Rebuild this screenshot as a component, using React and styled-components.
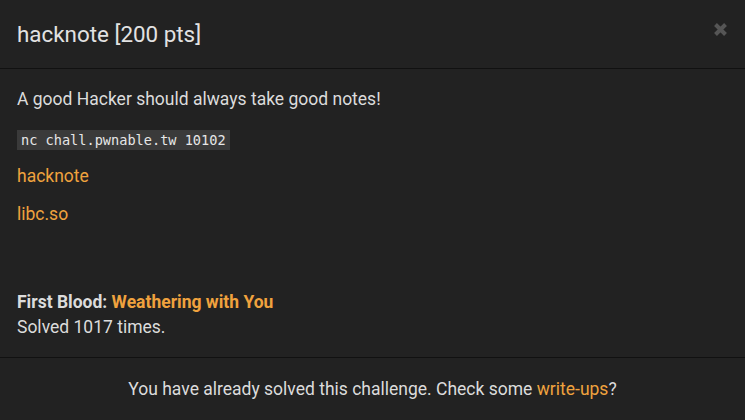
import React from 'react'
import styled, { createGlobalStyle } from 'styled-components'

const GlobalStyle = createGlobalStyle`
  html, body {
    margin: 0;
    padding: 0;
    background: #222222;
  }
  body {
    font-family: Roboto, 'Liberation Sans', sans-serif;
    color: #dcdcdc;
  }
`

const Modal = styled.div`
  width: 745px;
  height: 420px;
  display: flex;
  flex-direction: column;
  background: #222222;
`

const Header = styled.div`
  height: 68px;
  padding: 0 17px;
  display: flex;
  align-items: center;
  justify-content: space-between;
  border-bottom: 1px solid #111111;
`

const Title = styled.h4`
  margin: 0;
  font-size: 22.4px;
  font-weight: 400;
  color: #e2e2e2;
`

const Close = styled.svg`
  width: 15px;
  height: 15px;
  margin-right: 0;
  margin-top: -10px;
`

const Body = styled.div`
  flex: 1;
  padding: 18px 17px 0;
  display: flex;
  flex-direction: column;
  font-size: 17.5px;
`

const Text = styled.p`
  margin: 0 0 ${p => p.$gap || 0}px;
  line-height: ${p => p.$lh || 24}px;
`

const Code = styled.code`
  align-self: flex-start;
  font-family: 'DejaVu Sans Mono', 'Liberation Mono', monospace;
  font-size: 13.6px;
  background: #3a3a3a;
  color: #e6e6e6;
  padding: 2px 4px;
  line-height: 16px;
  margin-bottom: 14px;
`

const Link = styled.a`
  color: #f0a23e;
  text-decoration: none;
  font-weight: ${p => (p.$bold ? 700 : 400)};
`

const Strong = styled.span`
  font-weight: 700;
`

const Footer = styled.div`
  height: 62px;
  border-top: 1px solid #111111;
  display: flex;
  align-items: center;
  justify-content: center;
  font-size: 17.5px;
`

export default function App () {
  return (
    <>
      <GlobalStyle />
      <Modal>
        <Header>
          <Title>hacknote [200 pts]</Title>
          <Close viewBox='0 0 15 15'>
            <path d='M2.5 2.5 L12.5 12.5 M12.5 2.5 L2.5 12.5' stroke='#555555' strokeWidth='4' strokeLinecap='butt' />
          </Close>
        </Header>
        <Body>
          <Text $gap={19}>A good Hacker should always take good notes!</Text>
          <Code>nc chall.pwnable.tw 10102</Code>
          <Text $gap={14}><Link href='#'>hacknote</Link></Text>
          <Text $gap={64}><Link href='#'>libc.so</Link></Text>
          <Text $lh={25}>
            <Strong>First Blood: </Strong>
            <Link $bold href='#'>Weathering with You</Link>
          </Text>
          <Text $lh={25}>Solved 1017 times.</Text>
        </Body>
        <Footer>
          <span>
            You have already solved this challenge. Check some <Link href='#'>write-ups</Link>?
          </span>
        </Footer>
      </Modal>
    </>
  )
}
